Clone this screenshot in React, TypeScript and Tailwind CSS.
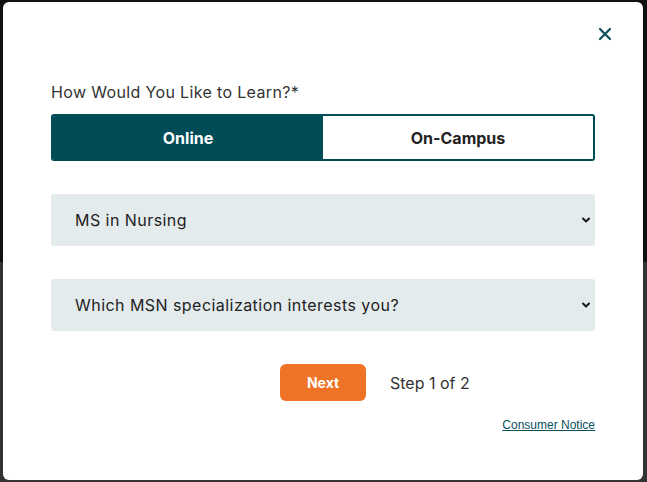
import React, { useState } from "react";

const font = { fontFamily: "Inter, 'Noto Sans', sans-serif" };

const ChevronDown = () => (
  <svg width="10" height="10" viewBox="0 0 10 10" fill="none" stroke="#1a1a1a" strokeWidth="2" strokeLinecap="round" strokeLinejoin="round">
    <path d="M2 3.5l3 3 3-3" />
  </svg>
);

const SelectBox = ({ label }: { label: string }) => (
  <div className="flex h-[52px] w-full items-center justify-between rounded-[3px] bg-[#e4ebed] pl-6 pr-[4px]">
    <span className="text-[16px] tracking-[0.45px] text-[#222]">{label}</span>
    <ChevronDown />
  </div>
);

export default function App() {
  const [mode, setMode] = useState("online");

  return (
    <div className="flex h-[482px] w-[647px] flex-col bg-[linear-gradient(#111111_262px,#333333_262px)]" style={font}>
      <div className="m-[2px] ml-[3px] mr-[4px] flex h-[478px] flex-col rounded-[6px] bg-white px-[48px]">
        {/* close */}
        <div className="flex justify-end pt-[25px] -mr-[17px]">
          <svg width="14" height="14" viewBox="0 0 14 14" fill="none" stroke="#0b4f5a" strokeWidth="2.2" strokeLinecap="round">
            <path d="M2 2l10 10M12 2L2 12" />
          </svg>
        </div>

        <div className="mt-[39px] text-[16px] tracking-[0.35px] text-[#333]">How Would You Like to Learn?*</div>

        {/* toggle */}
        <div className="mt-[10px] flex h-[47px] overflow-hidden rounded-[3px] border-2 border-[#004d57]">
          <button
            onClick={() => setMode("online")}
            className={`flex-1 text-[16px] font-bold ${mode === "online" ? "bg-[#004d57] text-white" : "bg-white text-[#222]"}`}
          >
            Online
          </button>
          <button
            onClick={() => setMode("campus")}
            className={`flex-1 text-[16px] font-bold ${mode === "campus" ? "bg-[#004d57] text-white" : "bg-white text-[#222]"}`}
          >
            On-Campus
          </button>
        </div>

        <div className="mt-[33px]">
          <SelectBox label="MS in Nursing" />
        </div>
        <div className="mt-[33px]">
          <SelectBox label="Which MSN specialization interests you?" />
        </div>

        {/* actions */}
        <div className="mt-[33px] flex items-center pl-[229px]">
          <button className="h-[37px] w-[86px] rounded-[6px] bg-[#ee7326] text-[14px] font-bold text-white">Next</button>
          <span className="ml-[24px] text-[16px] text-[#333]">Step 1 of 2</span>
        </div>

        <div className="mt-[15px] flex justify-end">
          <a href="#" className="text-[12px] text-[#0b4f5a] underline" style={{ fontFamily: "'Liberation Sans', sans-serif" }}>
            Consumer Notice
          </a>
        </div>
      </div>
    </div>
  );
}
